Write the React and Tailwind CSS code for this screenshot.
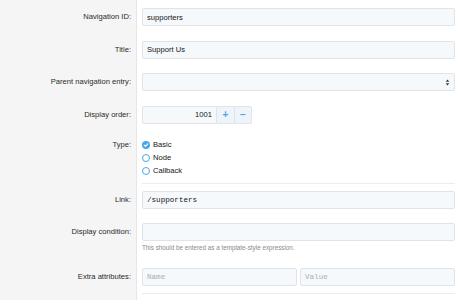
import React from "react";

const inputCls =
  "block h-[18px] w-full rounded-[2px] border border-[#dfe4ea] bg-[#f6f9fc] px-[4px] text-[7.6px] text-[#141414] outline-none";

function Row({ label, children, pad = "py-[7.25px]", labelH = "h-[18px]", divider = false }) {
  return (
    <div className="flex items-stretch">
      <div className={`w-[137px] shrink-0 border-r border-[#e6e6e6] bg-[#f5f5f5] pr-[5px] ${pad}`}>
        <div className={`flex ${labelH} items-center justify-end text-[7.6px] text-[#2a2a2a]`}>
          {label}
        </div>
      </div>
      <div className="flex-1 pl-[5px] pr-[4px]">
        <div className={`${pad} ${divider ? "border-b border-[#ececec]" : ""}`}>{children}</div>
      </div>
    </div>
  );
}

function Radio({ checked, label }) {
  return (
    <div className="flex h-[13px] items-center gap-[3px]">
      {checked ? (
        <span className="flex h-[8px] w-[8px] items-center justify-center rounded-full bg-[#47a7eb]">
          <svg width="6" height="6" viewBox="0 0 6 6">
            <path d="M1.2 3.1 2.5 4.3 4.8 1.8" fill="none" stroke="#fff" strokeWidth="1.1" strokeLinecap="round" strokeLinejoin="round" />
          </svg>
        </span>
      ) : (
        <span className="h-[8px] w-[8px] rounded-full border-[1.2px] border-[#47a7eb] bg-white" />
      )}
      <span className="text-[7.6px] text-[#141414]">{label}</span>
    </div>
  );
}

export default function App() {
  return (
    <div
      className="flex h-[300px] w-[459px] flex-col overflow-hidden bg-white text-[7.6px] leading-[10px]"
      style={{ fontFamily: '"Liberation Sans", Arial, sans-serif' }}
    >
      <div className="flex">
        <div className="h-[1px] w-[137px] border-r border-[#e6e6e6] bg-[#f5f5f5]" />
        <div className="flex-1" />
      </div>

      <Row label="Navigation ID:">
        <input className={inputCls} defaultValue="supporters" />
      </Row>
      <Row label="Title:">
        <input className={inputCls} defaultValue="Support Us" />
      </Row>
      <Row label="Parent navigation entry:">
        <div className={`${inputCls} flex items-center justify-end`}>
          <svg width="5" height="7" viewBox="0 0 5 7">
            <path d="M2.5 0.5 4.3 2.8H0.7Z" fill="#333" />
            <path d="M2.5 6.5 4.3 4.2H0.7Z" fill="#333" />
          </svg>
        </div>
      </Row>
      <Row label="Display order:">
        <div className="flex h-[18px] w-[110px]">
          <input
            className="block h-[18px] w-[75px] rounded-l-[2px] border border-[#dfe4ea] bg-[#f6f9fc] px-[4px] text-right text-[7.6px] text-[#141414] outline-none"
            defaultValue="1001"
          />
          <button className="flex h-[18px] w-[17px] items-center justify-center border-y border-[#dfe4ea] bg-[#eef4f9] text-[10px] font-bold leading-none text-[#47a7eb]">
            +
          </button>
          <button className="flex h-[18px] w-[18px] items-center justify-center rounded-r-[2px] border border-[#dfe4ea] bg-[#eef4f9] text-[10px] font-bold leading-none text-[#47a7eb]">
            −
          </button>
        </div>
      </Row>
      <Row label="Type:" divider labelH="h-[13px]" pad="pt-[7px] pb-[6px]">
        <div className="flex flex-col">
          <Radio checked label="Basic" />
          <Radio label="Node" />
          <Radio label="Callback" />
        </div>
      </Row>
      <Row label="Link:" pad="py-[7px]">
        <input
          className={`${inputCls} font-['Liberation_Mono',monospace] text-[7.4px]`}
          defaultValue="/supporters"
        />
      </Row>
      <Row label="Display condition:" pad="pt-[7px] pb-[9px]">
        <input className={inputCls} />
        <p className="mt-[2px] text-[6.3px] leading-[9px] text-[#8a8a8a]">
          This should be entered as a template-style expression.
        </p>
      </Row>
      <Row label="Extra attributes:" divider pad="pt-[7px] pb-[7px]">
        <div className="flex gap-[3px]">
          <input
            className={`${inputCls} font-['Liberation_Mono',monospace] text-[7.4px] placeholder:text-[#a7afb8]`}
            placeholder="Name"
          />
          <input
            className={`${inputCls} font-['Liberation_Mono',monospace] text-[7.4px] placeholder:text-[#a7afb8]`}
            placeholder="Value"
          />
        </div>
      </Row>
      <div className="flex flex-1">
        <div className="w-[137px] border-r border-[#e6e6e6] bg-[#f5f5f5]" />
        <div className="flex-1" />
      </div>
    </div>
  );
}
